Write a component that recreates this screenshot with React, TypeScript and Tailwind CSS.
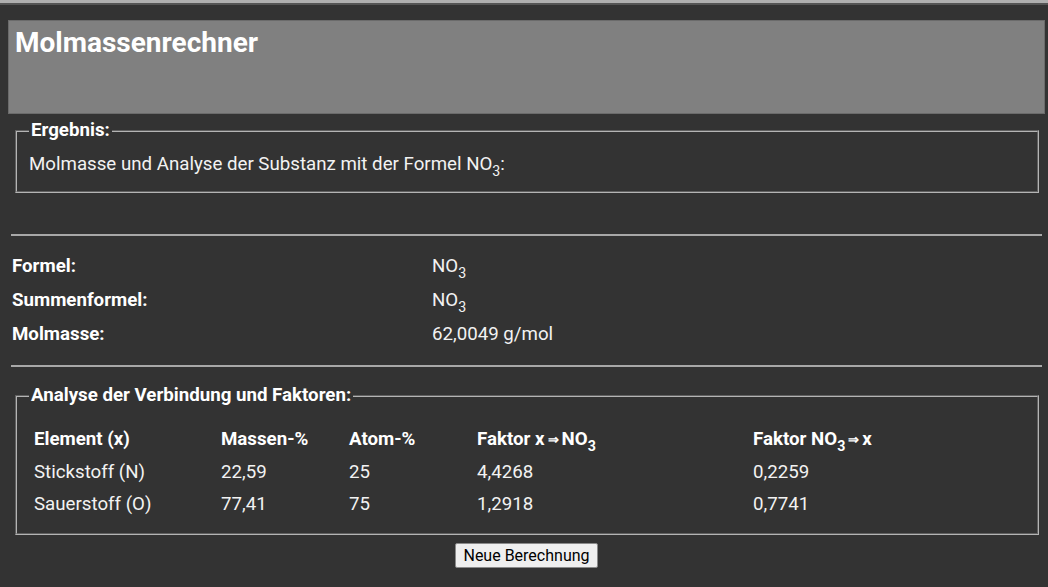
const font = { fontFamily: "Roboto, 'Liberation Sans', sans-serif" };

const NO3 = () => (
  <>
    NO<sub className="text-[0.76em] align-[-0.16em] leading-none">3</sub>
  </>
);

const Arrow = () => <span className="mx-[3px] text-[13px] align-[1px]">⇒</span>;

const stats = [
  { label: "Formel:", value: <NO3 /> },
  { label: "Summenformel:", value: <NO3 /> },
  { label: "Molmasse:", value: "62,0049 g/mol" },
];

const analysis = [
  { el: "Stickstoff (N)", mass: "22,59", atom: "25", f1: "4,4268", f2: "0,2259" },
  { el: "Sauerstoff (O)", mass: "77,41", atom: "75", f1: "1,2918", f2: "0,7741" },
];

const gridCols = "grid grid-cols-[187px_128px_128px_276px_1fr]";

export default function App() {
  return (
    <div className="min-h-[587px] bg-[#333333] text-[18.7px] text-white" style={font}>
      {/* obere Leiste */}
      <div className="h-[5px] border-t-[3px] border-[#b0b0b0] bg-[#555555]" />

      <div className="ml-[8px] mr-[3px] pb-4">
        {/* Kopf */}
        <div className="mt-[15px] h-[94px] border border-[#6b6b6b] bg-[#808080] px-[6px] pt-[5px]">
          <h1 className="text-[28px] font-bold leading-[33px]">Molmassenrechner</h1>
        </div>

        {/* Ergebnis */}
        <fieldset className="mx-[7px] mr-[6px] mt-[6px] border-2 border-[#b4b4b4] px-[12px] pb-[16px] [border-style:groove]">
          <legend className="px-[2px] font-bold leading-[21px]">Ergebnis:</legend>
          <p className="mt-[12px] leading-[22px] text-[#f2f2f2]">
            Molmasse und Analyse der Substanz mit der Formel <NO3 />:
          </p>
        </fieldset>

        <hr className="mx-[3px] mt-[41px] border-t-2 border-[#a8a8a8]" />

        <div className="mt-[13px]">
          {stats.map((s) => (
            <div key={s.label} className="flex h-[34px] items-center px-[4px]">
              <span className="w-[420px] font-bold">{s.label}</span>
              <span className="text-[#f2f2f2]">{s.value}</span>
            </div>
          ))}
        </div>

        <hr className="mx-[3px] mt-[14px] border-t-2 border-[#a8a8a8]" />

        {/* Analyse */}
        <fieldset className="mx-[7px] mr-[6px] mt-[18px] border-2 border-[#b4b4b4] px-[12px] pb-[13px] [border-style:groove]">
          <legend className="px-[2px] font-bold leading-[21px]">
            Analyse der Verbindung und Faktoren:
          </legend>
          <div className="mt-[16px] pl-[5px]">
            <div className={`${gridCols} h-[34px] items-center font-bold`}>
              <span>Element (x)</span>
              <span>Massen-%</span>
              <span>Atom-%</span>
              <span>
                Faktor x<Arrow />
                <NO3 />
              </span>
              <span>
                Faktor <NO3 />
                <Arrow />x
              </span>
            </div>
            {analysis.map((r) => (
              <div key={r.el} className={`${gridCols} h-[32px] items-center text-[#f2f2f2]`}>
                <span>{r.el}</span>
                <span>{r.mass}</span>
                <span>{r.atom}</span>
                <span>{r.f1}</span>
                <span>{r.f2}</span>
              </div>
            ))}
          </div>
        </fieldset>

        <div className="mt-[8px] flex justify-center">
          <button
            type="button"
            className="h-[25px] rounded-[2px] border border-[#8a8a8a] bg-[#efefef] px-[7px] text-[16px] leading-none text-black"
          >
            Neue Berechnung
          </button>
        </div>
      </div>
    </div>
  );
}
